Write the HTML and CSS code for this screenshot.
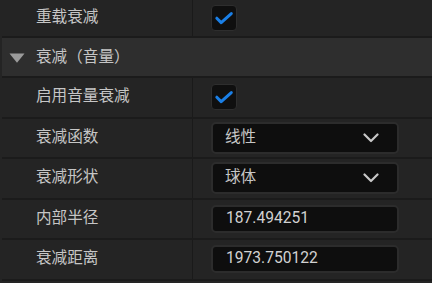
FILE: index.html
```html
<!DOCTYPE html>
<html lang="zh">
<head>
<meta charset="utf-8">
<link rel="stylesheet" href="styles.css">
</head>
<body>
<div class="panel">
  <div class="row row-first">
    <div class="label">重载衰减</div>
    <div class="value">
      <span class="checkbox"><svg width="26" height="26" viewBox="0 0 26 26"><path d="M5.8 13.2 L10.2 17.6 L20.3 8.6" fill="none" stroke="#1a7fe6" stroke-width="3" stroke-linecap="round" stroke-linejoin="round"/></svg></span>
    </div>
  </div>
  <div class="section">
    <svg class="tri" width="16" height="10" viewBox="0 0 16 10"><path d="M0.5 0.5 L15.5 0.5 L8 9.8 Z" fill="#9b9b9b"/></svg>
    <span class="section-title">衰减（音量）</span>
  </div>
  <div class="row">
    <div class="label">启用音量衰减</div>
    <div class="value">
      <span class="checkbox"><svg width="26" height="26" viewBox="0 0 26 26"><path d="M5.8 13.2 L10.2 17.6 L20.3 8.6" fill="none" stroke="#1a7fe6" stroke-width="3" stroke-linecap="round" stroke-linejoin="round"/></svg></span>
    </div>
  </div>
  <div class="row">
    <div class="label">衰减函数</div>
    <div class="value">
      <div class="combo"><span>线性</span><svg class="chev" width="16" height="10" viewBox="0 0 16 10"><path d="M1.5 1.5 L8 8 L14.5 1.5" fill="none" stroke="#c8c8c8" stroke-width="2.2" stroke-linecap="round" stroke-linejoin="round"/></svg></div>
    </div>
  </div>
  <div class="row">
    <div class="label">衰减形状</div>
    <div class="value">
      <div class="combo"><span>球体</span><svg class="chev" width="16" height="10" viewBox="0 0 16 10"><path d="M1.5 1.5 L8 8 L14.5 1.5" fill="none" stroke="#c8c8c8" stroke-width="2.2" stroke-linecap="round" stroke-linejoin="round"/></svg></div>
    </div>
  </div>
  <div class="row">
    <div class="label">内部半径</div>
    <div class="value">
      <div class="field">187.494251</div>
    </div>
  </div>
  <div class="row">
    <div class="label">衰减距离</div>
    <div class="value">
      <div class="field">1973.750122</div>
    </div>
  </div>
</div>
</body>
</html>
```
FILE: styles.css
```css
html, body {
  margin: 0;
  padding: 0;
  background: #242424;
  width: 432px;
  height: 283px;
  overflow: hidden;
}
.panel {
  font-family: Roboto, "Noto Sans CJK SC", sans-serif;
  font-size: 15.6px;
  color: #c6c6c6;
  padding-left: 2px;
}
.row {
  display: flex;
  height: 40.5px;
  box-sizing: border-box;
  border-bottom: 2px solid #1b1b1b;
  background: #242424;
}
.row-first {
  height: 38px;
}
.label {
  width: 191px;
  flex: none;
  box-sizing: border-box;
  padding-left: 34px;
  border-right: 1px solid #1a1a1a;
  display: flex;
  align-items: center;
  line-height: 1;
}
.value {
  flex: 1;
  display: flex;
  align-items: center;
  padding-left: 18px;
}
.checkbox {
  width: 26px;
  height: 26px;
  box-sizing: border-box;
  border: 1.5px solid #2e2e2e;
  border-radius: 4px;
  background: #0f0f0f;
  display: flex;
  align-items: center;
  justify-content: center;
}
.checkbox svg {
  display: block;
  flex: none;
}
.section {
  height: 40px;
  box-sizing: border-box;
  border-bottom: 2px solid #1b1b1b;
  background: #2e2e2e;
  display: flex;
  align-items: center;
  padding-left: 7px;
  gap: 11px;
  line-height: 1;
}
.tri {
  display: block;
  margin-top: 2px;
}
.section-title {
  color: #c6c6c6;
  margin-top: 2px;
}
.combo, .field {
  width: 188px;
  box-sizing: border-box;
  border: 2px solid #2c2c2c;
  border-radius: 5px;
  background: #0e0e0e;
  display: flex;
  align-items: center;
  line-height: 1;
}
.combo {
  height: 32px;
  padding-left: 12px;
  padding-right: 18px;
  justify-content: space-between;
}
.chev {
  display: block;
}
.field {
  height: 28px;
  padding-left: 13px;
  color: #d2d2d2;
}
```
